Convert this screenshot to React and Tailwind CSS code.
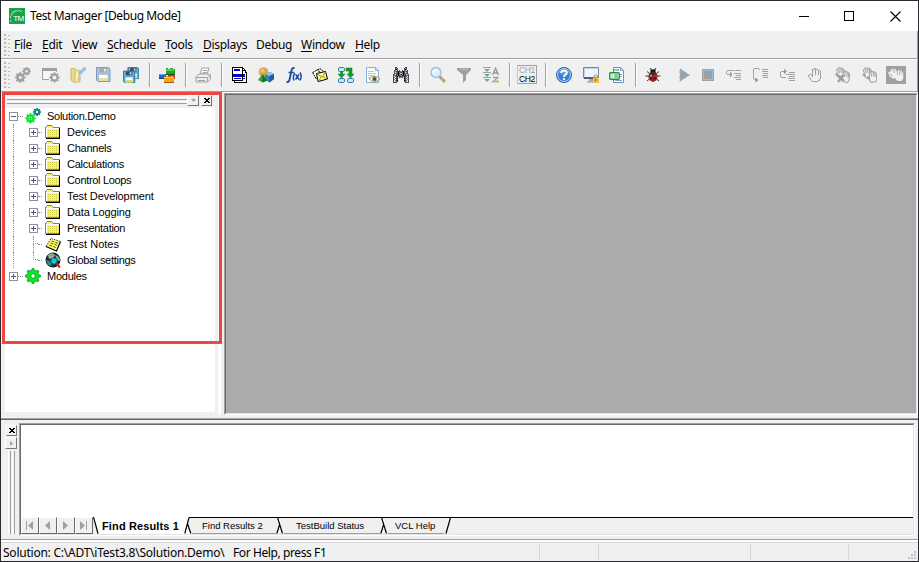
import React from "react";

/* Draws a pixel icon: each character in a row picks a colour from the palette. */
const COLORS = {
  "#": "#a0a0a0", k: "#000000", w: "#ffffff", b: "#0000c8", m: "#4a4a52", d: "#80808a", l: "#d8d8e4",
};
function Pix({ rows, className = "" }) {
  const w = Math.max(...rows.map((r) => r.length));
  return (
    <svg width={w} height={rows.length} viewBox={`0 0 ${w} ${rows.length}`} shapeRendering="crispEdges" className={`block shrink-0 ${className}`}>
      {rows.flatMap((row, y) =>
        [...row].map((ch, x) => (COLORS[ch] ? <rect key={`${x}-${y}`} x={x} y={y} width="1" height="1" fill={COLORS[ch]} /> : null))
      )}
    </svg>
  );
}
function Svg({ children, w = 16, h = 16, crisp = false }) {
  return (
    <svg width={w} height={h} viewBox={`0 0 ${w} ${h}`} fill="none" shapeRendering={crisp ? "crispEdges" : "auto"} className="block shrink-0">
      {children}
    </svg>
  );
}

const HAND = [
  "......##.....",
  "....##.###...",
  "....#..#..##.",
  "....#..#..#.#",
  "....#..#..#.#",
  "....#..#..#.#",
  ".##.#..#..#.#",
  "#..##.......#",
  "#...#.......#",
  ".#..........#",
  "..#.........#",
  "..#........#.",
  "...#......##.",
  "....######...",
];

/* Small open hand used by the paired-hand buttons. */
function MiniHand({ x, y, fill, stroke, tilt = 0 }) {
  return (
    <g transform={`translate(${x} ${y}) rotate(${tilt} 5 6)`} stroke={stroke} fill="none" strokeWidth="1">
      <path d="M2.500 7.500L1.500 5.800.5 6.500 3.500 11.500h5l1-2v-6l-1-1-1-1-1 0L5 .5l-.8 1-1.700.5z" fill={fill} />
      <path d="M4.500 2v4M6.500 1.500V6M8.200 2.500V6.500" />
    </g>
  );
}

function gearPath(cx, cy, r, n) {
  let d = "";
  for (let i = 0; i < n * 4; i++) {
    const a = ((i - 0.5) * Math.PI * 2) / (n * 4);
    const q = i % 4 < 2 ? r : r * 0.74;
    d += `${i ? "L" : "M"}${(cx + Math.cos(a) * q).toFixed(2)} ${(cy + Math.sin(a) * q).toFixed(2)}`;
  }
  return d + "Z";
}
function Gear({ x, y, r, fill, hole, stroke, eye = 0.3 }) {
  return (
    <g>
      <path d={gearPath(x, y, r, 8)} fill={fill} stroke={stroke || fill} strokeWidth={stroke ? 0.8 : 0.5} />
      <circle cx={x} cy={y} r={r * eye} fill={hole} stroke={stroke} strokeWidth={stroke ? 0.8 : 0} />
    </g>
  );
}

const Gears = () => (
  <Svg><Gear x={5.3} y={10.5} r={5.2} fill="#a0a0a0" hole="#f0f0f0" /><Gear x={11.6} y={4.3} r={4.2} fill="#a0a0a0" hole="#f0f0f0" /></Svg>
);
const WindowGear = () => (
  <Svg w={18}>
    <path d="M.5 2.500h14v10H.5z" fill="#f6f6f6" stroke="#a0a0a0" /><path d="M0 1h15v3H0z" fill="#a0a0a0" />
    <circle cx="12.500" cy="10.500" r="5.900" fill="#f0f0f0" /><Gear x={12.5} y={10.5} r={5} fill="#a0a0a0" hole="#f0f0f0" eye={0.38} />
  </Svg>
);
const OpenFolder = () => (
  <Svg>
    <path d="M1 1.500h4l1 1.500v12H3.500L1 13z" fill="#eadb94" stroke="#cdb75d" />
    <path d="M5 4l4-1 1 2-2 10-3 .5z" fill="#f5edbf" stroke="#d2bd62" />
    <path d="M8 6l2-3 2.500-.5L12 1l4-1-.5 4.500-1.300-.7L12 6.500 9.500 8z" fill="#9bbde0" /><path d="M10 8v6l-2 1.500" stroke="#aaa" />
  </Svg>
);
const Floppy = ({ bold }) => (
  <g>
    <path d="M.5.5h12l1.500 1.500v12.500H2L.5 13z" fill={bold ? "#58aede" : "#a8c4e4"} stroke={bold ? "#146ca8" : "#8399b8"} />
    <path d="M3.500 1h7.500v4.500H3.500z" fill={bold ? "#434d58" : "#aaa"} /><path d="M8 2h2v2.500H8z" fill="#e4e8ee" />
    <path d="M3 8h8.500v6H3z" fill="#fff" /><path d="M3 11h8.500v3H3z" fill={bold ? "#eed84a" : "#eedd94"} />
  </g>
);
const Save = () => <Svg><Floppy /></Svg>;
const SaveAll = () => (
  <Svg><g transform="translate(4.500 0) scale(.8)"><Floppy bold /></g><g transform="translate(0 3.600) scale(.84)"><Floppy bold /></g></Svg>
);
const Blocks = () => (
  <Svg>
    <path d="M7 1h2v1h2V1h3v1h2v6H7z" fill="#25a030" /><path d="M7 2h8v2H7z" fill="#53cc49" /><path d="M7 7h9v1H7z" fill="#075c18" />
    <path d="M0 7h7v4H0z" fill="#2868c0" /><path d="M0 7h6v1H0z" fill="#63a6ec" /><path d="M0 11h6v1H0z" fill="#143a80" />
    <path d="M9 8h7v4H9z" fill="#d83a24" /><path d="M5 10h2V9h2v1h3V9h2v1h1v5H5z" fill="#f2a61b" /><path d="M5 10h9v1H5z" fill="#ffd04a" /><path d="M5 15h10v1H5z" fill="#98600c" />
  </Svg>
);
const Printer = () => (
  <Svg>
    <path d="M5 7l2-6h7l-2 6z" fill="#fff" stroke="#a0a0a0" /><path d="M8 3.500h4M7.500 5.500h4" stroke="#a0a0a0" />
    <path d="M1 10l3-3h10l1.500 1v4l-3 3H1z" fill="#eee" stroke="#a0a0a0" /><path d="M1 10.500h11.500l3-2.500M12.500 11v4M3 13.500h7" stroke="#a0a0a0" />
  </Svg>
);
const Forms = () => (
  <Pix rows={[
    "kkkkkkkkkkk....", "kwwwwwwwwwkk...", "kwbbbbbbwwkwk..", "kwbbbbbbwwkkkk.", "kwwwwwwwwwkwwk.", "kwwwwwwwwwkwwkk",
    "kwwwwwwwwwkwwwk", "kbbbbbbbbbkbbwk", "kbbbbbbbbbkbbwk", "kbbbbbbbbbkbbwk", "kwwwwwwwwwkwwwk", "kwbbbbbbbwkbbwk", "kwwwwwwwwwkwwwk", "kkkkkkkkkkkwwwk", "..kwwwwwwwwwwwk", "..kkkkkkkkkkkkk",
  ]} />
);
const Shapes = () => (
  <Svg>
    <circle cx="5.500" cy="5" r="4.800" fill="#e5a34c" /><circle cx="4.500" cy="3.800" r="2" fill="#f3c47e" />
    <path d="M7 7l5-2 4 2v5l-4.500 3.500L7 13z" fill="#3784bd" /><path d="M7 7l4.500 2L16 7l-4-2z" fill="#91c6e8" /><path d="M11.500 9v6.500L16 12V7z" fill="#1f5f99" />
    <path d="M4.500 7L9 13.500 4.500 15.500 0 13z" fill="#31a531" /><path d="M4.500 7L9 13.500l-4.500 2z" fill="#0d721c" />
  </Svg>
);
const Fx = () => (
  <Svg>
    <path d="M8.500 1.500C7 .3 6 1.200 5.500 3.500L3.600 12.500C3.200 14.600 2 15.500.5 14.500" stroke="#1c50a0" strokeWidth="1.900" />
    <path d="M2.500 5.500H8" stroke="#1c50a0" strokeWidth="1.500" />
    <path d="M9 6Q6.300 9.500 8 13.500M14 5.500Q16.500 9.500 13.700 13.500M9.700 7.500l3.300 5M13 7.500l-3.500 5" stroke="#1c50a0" strokeWidth="1.500" />
  </Svg>
);
const Cards = () => (
  <Svg>
    <path d="M3.500 4.500L8 1.500l3.500 3" fill="#f4f4f4" stroke="#000" strokeDasharray="2 .6" />
    <path d="M.7 5.500L6 2.500l3 5-5 4z" fill="#fff" stroke="#000" strokeDasharray="2 .6" />
    <path d="M4.500 6.500l9-2 2 7.500-9.500 2.500z" fill="#fffb9a" stroke="#000" /><path d="M5 7l5.500 3L13.500 5M7 14l2-4M15 12l-4-2.500" stroke="#b08c10" />
  </Svg>
);
const Flow = () => (
  <Svg>
    {[[0.5, 0.5], [0.5, 11.5], [9.5, 11.5]].map(([x, y]) => <rect key={`${x}${y}`} x={x} y={y} width="6" height="4" rx="1.300" fill="#c8e6fa" stroke="#327cab" />)}
    <path d="M2.500 5h2v2H7l-3.500 4L0 7h2.500zM8 1h6v6h2l-3.500 4L9 7h2V4H8z" fill="#12a02c" stroke="#08711b" strokeWidth=".5" />
  </Svg>
);
const DocEye = () => (
  <Svg>
    <path d="M1.500.5h9l3 3v12h-12z" fill="#f8fcff" stroke="#8caed0" /><path d="M10.500.5v3h3" stroke="#8caed0" />
    <path d="M3 4.500h6M3 6.500h8M3 8.500h7M3 10.500h3" stroke="#a9c9e8" /><path d="M4 12q5-5.500 11 0-5.500 5-11 0z" fill="#fff" stroke="#b78b56" />
    <circle cx="9.500" cy="12" r="2.300" fill="#638a35" /><circle cx="9.500" cy="12" r="1" fill="#222" />
  </Svg>
);
const Binoculars = () => (
  <Pix rows={[
    "..mm........mm..", "..mdm......mdm..", "..mkm......mkm..", ".mdlm.m..m.mdlm.", ".mdmmkmddmkmdmm.", ".mldmkdmmdkmldm.", ".mdmmkmllmkmdmm.", "mdlmmkdmmdkmmldm",
    "mdmmdkmddmkdmmdm", "mldmkdmmmmdkmdlm", "mdlmm.mddm.mmldm", "mldmk......kmdlm", "mdlmm......mmldm", "mldmk......kmdlm", "mllmm......mmllm", "mmmm........mmmm",
  ]} />
);
const Magnify = () => (
  <Svg><path d="M10 10l5 4.800" stroke="#c5a272" strokeWidth="3" /><path d="M9 9l2 2" stroke="#999" strokeWidth="2" /><circle cx="6" cy="5.500" r="5" fill="#d9efff" stroke="#9dbfdf" strokeWidth="1.400" /><path d="M3 6q.5-3 4-3" stroke="#fff" strokeWidth="1.500" /></Svg>
);
const Funnel = () => <Svg><path d="M1 1h14v2l-5 5v5l-3 3V8L1 3z" fill="#a0a0a0" /><path d="M4 2.500h8" stroke="#b9b9b9" /></Svg>;
const SortAz = () => (
  <Svg>
    <path d="M0 .5h8M0 5.500h8M0 10.500h8" stroke="#a0a0a0" /><path d="M1 2h6L4 5zM1 12h6l-3 3z" fill="#999" /><path d="M1 7h6l-3 3z" fill="#62b577" />
    <path d="M9.500 8l3-6.500 3 6.500M10.500 6h4" stroke="#a0a0a0" strokeWidth="1.700" /><path d="M10 10.500h5l-5 4h6" stroke="#a0a0a0" strokeWidth="1.300" /><path d="M10 14.500h6" stroke="#e4b23c" strokeWidth="1.500" />
  </Svg>
);
const Channels = () => (
  <div className="h-[19px] w-5 shrink-0 border border-b-[#a0a0a0] border-l-[#c4c4c4] border-r-[#a0a0a0] border-t-[#a0a0a0] pl-px font-['Liberation_Sans',Arial,sans-serif] text-[8.5px] leading-[8px] tracking-[-0.4px]">
    <div className="h-2 text-[#a0a0a0]">CH1</div><div className="pt-px text-black">CH2</div>
  </div>
);
const Help = () => (
  <Svg><circle cx="8" cy="8" r="7.500" fill="#3a82cf" stroke="#2463a8" /><circle cx="8" cy="8" r="6.500" stroke="#b2d5f3" /><path d="M2.500 6q5.500-7 11 0-5.500 3-11 0z" fill="#74b0e8" opacity=".55" />
    <path d="M5.200 6Q5.300 3.500 8 3.500t2.800 2.200Q10.800 7 9.200 7.800 8 8.500 8 10M8 11.200v1.800" stroke="#fff" strokeWidth="1.900" /></Svg>
);
const Monitor = () => (
  <Svg><path d="M.5.5h15v10H.5z" fill="#eef5fc" stroke="#7989a0" /><path d="M1.500 9.500V1.500h13" stroke="#bdd3e9" /><path d="M1 10h14v2H1z" fill="#4e6078" /><path d="M6 12h4v2h2v1.500H4V14h2z" fill="#9caabd" />
    <path d="M11 11V9q1.700-2.500 3.500 0v2" stroke="#a98528" /><path d="M10 10.500h6V16h-6z" fill="#f3bf32" /><path d="M12.800 12v2" stroke="#6c4b08" /></Svg>
);
const DocSheet = () => (
  <Svg><path d="M4.500.5h7l3 3v12h-10z" fill="#fff" stroke="#6b91b9" /><path d="M11.500.5v3h3M10 7.500h3M10 9.500h3M6 13.500h7" stroke="#7da3c7" /><path d="M5 2h5v2H5z" fill="#95bad8" />
    <rect x=".7" y="5.700" width="9.600" height="6.600" rx="1" fill="#fff" stroke="#159737" strokeWidth="1.400" /><path d="M2.500 8h1M5 8h4M2.500 10h1M5 10h4" stroke="#159737" strokeWidth="1.200" /></Svg>
);
const Bug = () => (
  <Svg><path d="M5 1l1.500 2M11 1L9.500 3M2 4.500l2.500 2M14 4.500l-2.500 2M.5 9h3.500M15.500 9H12M2 14l2.500-2M14 14l-2.500-2" stroke="#333" /><path d="M5.500 2.500h5V6h-5z" fill="#111" /><ellipse cx="8" cy="9.700" rx="4.600" ry="5" fill="#a82c26" />
    <path d="M4 6.500q4-4 8 0l-1 1H5z" fill="#333" /><path d="M8 6v9" stroke="#5d100d" /><circle cx="6.200" cy="8.700" r="1" fill="#f09a8a" /><circle cx="5.800" cy="11.500" r="1" fill="#3d0808" /><circle cx="10.200" cy="11.500" r="1" fill="#3d0808" /></Svg>
);
const Play = () => <Svg w={12} h={14}><path d="M1 .8l9.500 6.200L1 13.200z" fill="#a0a0a0" stroke="#87b9e9" strokeDasharray="4 1" /></Svg>;
const Stop = () => <Svg w={12} h={12} crisp><path d="M0 0h12v12H0z" fill="#a0a0a0" /><path d="M1 1h10v10H1z" fill="#8dbdea" /><path d="M2 2h8v6l-2 2H2z" fill="#a0a0a0" /></Svg>;
const StepInto = () => <Svg w={15} h={12} crisp><path d="M1 1h7v1H1zM0 2h1v3H0zM1 5h5v1H1zM4 3h1v5H4zM5 4h1v3H5zM9 1h6v1H9zM8 4h7v1H8zM10 6h5v1h-5zM8 8h7v1H8zM10 10h5v1h-5z" fill="#a0a0a0" /></Svg>;
const StepOver = () => <Svg w={15} h={16} crisp><path d="M1 1h5v1H1zM0 2h1v10H0zM1 12h4v1H1zM2 11h2v4H2zM4 12h1v2H4zM6 2h1v1H6zM9 2h6v1H9zM9 4h6v1H9zM10 6h5v1h-5zM9 8h6v1H9zM10 10h5v1h-5z" fill="#a0a0a0" /></Svg>;
const StepOut = () => <Svg w={15} h={14} crisp><path d="M1 3h6v1H1zM4 1h1v5H4zM5 2h1v3H5zM0 4h1v5H0zM1 9h5v1H1zM9 4h6v1H9zM6 6h9v1H6zM9 8h6v1H9zM8 10h7v1H8zM9 12h6v1H9z" fill="#a0a0a0" /></Svg>;
const HandOne = () => <Pix rows={HAND} />;
const HandsCross = () => (
  <Svg><MiniHand x={1} y={0} fill="#f0f0f0" stroke="#a0a0a0" tilt={-10} /><MiniHand x={6} y={3.5} fill="#f0f0f0" stroke="#a0a0a0" tilt={10} /><path d="M4 8l6 6M10 8l-6 7" stroke="#a0a0a0" strokeWidth="2.400" /></Svg>
);
const HandsTwo = () => (
  <Svg><MiniHand x={1} y={0} fill="#f0f0f0" stroke="#a0a0a0" tilt={-20} /><MiniHand x={6} y={3.5} fill="#f0f0f0" stroke="#a0a0a0" tilt={-5} /></Svg>
);
const HandsSolid = () => (
  <div className="flex h-[18px] w-5 shrink-0 items-center justify-center bg-[#a0a0a0]">
    <Svg w={16} h={15}>
      <path d="M6 11.500L2.500 9 1 5.800l1-.5 2 1.700L3 2.500M5 8L5 1.500M7 7L7.500 2" stroke="#f0f0f0" strokeWidth="1.400" />
      <path d="M3 6h5v5H5z" fill="#f0f0f0" /><path d="M8.500 9V4M10.700 9V3M12.900 9V3.500M14.500 10V5.500M9 13L6.500 8.500" stroke="#f0f0f0" strokeWidth="1.400" /><path d="M8 8h7.200v3.500L13.500 14H9.500L8 11.500z" fill="#f0f0f0" />
    </Svg>
  </div>
);
const Sep = () => <div className="h-6 w-0.5 shrink-0 border-l border-[#a0a0a0] bg-white" />;

const TOOLS = [
  [Gears, "ml-[3px]"], [WindowGear, "ml-[11px]"], [OpenFolder, "ml-[10px]"], [Save, "ml-[10px]"], [SaveAll, "ml-[11px]"], [Sep, "ml-[10px]"],
  [Blocks, "ml-2"], [Sep, "ml-[10px]"], [Printer, "ml-2"], [Sep, "ml-[10px]"],
  [Forms, "ml-[9px]"], [Shapes, "ml-[11px]"], [Fx, "ml-3"], [Cards, "ml-[10px]"], [Flow, "ml-[10px]"], [DocEye, "ml-[11px]"], [Binoculars, "ml-3"], [Sep, "ml-[10px]"],
  [Magnify, "ml-[9px]"], [Funnel, "ml-[10px]"], [SortAz, "ml-[11px]"], [Sep, "ml-[10px]"], [Channels, "ml-[6px]"], [Sep, "ml-2"],
  [Help, "ml-[9px]"], [Monitor, "ml-[11px]"], [DocSheet, "ml-[10px]"], [Sep, "ml-[10px]"], [Bug, "ml-2"],
  [Play, "ml-[18px]"], [Stop, "ml-[11px]"], [StepInto, "ml-3"], [StepOver, "ml-3"], [StepOut, "ml-3"], [HandOne, "ml-[13px]"], [HandsCross, "ml-[13px]"], [HandsTwo, "ml-[11px]"], [HandsSolid, "ml-[9px]"],
];

function Grip({ rows }) {
  return (
    <svg width="8" height={rows * 4} viewBox={`0 0 8 ${rows * 4}`} shapeRendering="crispEdges" className="block shrink-0">
      {Array.from({ length: rows }, (_, i) => (
        <g key={i}>
          <path d={`M1 ${i * 4 + 3}h1v1h-1zM5 ${i * 4 + 1}h1v1h-1z`} fill="#fff" />
          <path d={`M0 ${i * 4 + 1}h2v2h-2zM4 ${i * 4 + 2}h2v1h-2z`} fill="#b8b8b8" />
        </g>
      ))}
    </svg>
  );
}

const MENU = [
  ["", "F", "ile", "w-7"], ["", "E", "dit", "w-[30px]"], ["", "V", "iew", "w-[35px]"], ["", "S", "chedule", "w-[58px]"], ["", "T", "ools", "w-[38px]"],
  ["", "D", "isplays", "w-[53px]"], ["Debug", "", "", "w-[45px]"], ["", "W", "indow", "w-[54px]"], ["", "H", "elp", "w-8"],
];

function Expander({ minus }) {
  return (
    <svg width="9" height="9" viewBox="0 0 9 9" shapeRendering="crispEdges" className="block shrink-0">
      <rect x=".5" y=".5" width="8" height="8" fill="#fff" stroke="#919191" />
      <path d={minus ? "M2 4h5v1H2z" : "M2 4h5v1H2zM4 2h1v5H4z"} fill="#3c5aa8" />
    </svg>
  );
}
const Folder = () => (
  <svg width="16" height="14" viewBox="0 0 16 14" shapeRendering="crispEdges" className="block">
    <path d="M2 0h5v1h1v1h7v12H1v-1H0V2h1V1h1z" fill="#808080" />
    <path d="M2 1h5v1h1v1h6v9H1V2h1z" fill="#fffb35" />
    <path d="M1 3.500h13M1 5.500h13M1 7.500h13M1 9.500h13M1 11.500h13" stroke="#d6ce48" strokeDasharray="1 1" />
    <path d="M1 3h13v1H2v8H1z" fill="#fff" /><path d="M14 3h1v11H1v-1h13z" fill="#000" />
  </svg>
);
const Notes = () => (
  <Svg>
    <path d="M6 2.500l9.500 3-4 9.500L1 10.500z" fill="#ffff70" /><path d="M15.500 5.500L11.500 15 1 10.500" stroke="#000" strokeWidth="1.200" /><path d="M1 10.500l5-8 9.500 3" stroke="#000" strokeWidth=".8" strokeDasharray="1.500 1" />
    <path d="M6.500 5l6.500 2.200M5.500 7l6.500 2.200M4.300 9l6.500 2.500" stroke="#5c5a20" strokeDasharray="3 1" />
  </Svg>
);
const Globe = () => (
  <Svg><circle cx="8" cy="8" r="7.500" fill="#18282e" /><path d="M3 3l4-2 3 2-2 3-4 1zM10 3l4 2 1 4-3-1z" fill="#a4b4a8" /><path d="M1 8l4 1 2 5-4-1z" fill="#278d91" /><circle cx="9" cy="9" r="3.300" fill="#16c8d0" stroke="#075a64" /><path d="M5 4l3-1M12 4l2 3" stroke="#47a05a" /><path d="M11.500 11.500l3.500 4" stroke="#d81818" strokeWidth="2" /></Svg>
);
const SolutionIcon = () => (
  <Svg><Gear x={12} y={4} r={4} fill="#008080" hole="#fff" /><Gear x={5.5} y={10.3} r={5.1} fill="#00f020" hole="#fff" /><path d="M5.500 9.500v2M4.500 10.500h2" stroke="#006000" strokeWidth=".7" /></Svg>
);
const ModulesIcon = () => <Svg><Gear x={8} y={8} r={7.5} fill="#00f020" hole="#fff" stroke="#087c18" /></Svg>;

const FOLDERS = [
  ["Devices", ""], ["Channels", "tracking-[-0.25px]"], ["Calculations", "tracking-[-0.25px]"], ["Control Loops", "tracking-[-0.33px]"],
  ["Test Development", "tracking-[-0.08px]"], ["Data Logging", "tracking-[-0.15px]"], ["Presentation", "tracking-[-0.3px]"],
];

function Root({ minus, icon, label, tracking }) {
  return (
    <div className="flex h-4 items-center pl-1">
      <Expander minus={minus} />
      <div className="mr-0.5 w-[5px] border-t border-dotted border-[#919191]" />
      {icon}
      <span className={`ml-[6px] text-black ${tracking}`}>{label}</span>
    </div>
  );
}
function Leaf({ plus, icon, label, last, tracking = "" }) {
  return (
    <div className="flex h-4 items-center pl-2">
      <div className="flex h-4 w-4 items-center border-l border-dotted border-[#919191]" />
      <div className="flex h-4 w-[9px] shrink-0 items-center">
        {plus ? <Expander /> : (
          <div className="flex h-4 w-full flex-col pl-1">
            <div className="h-2 border-b border-l border-dotted border-[#919191]" />
            <div className={last ? "h-2" : "h-2 border-l border-dotted border-[#919191]"} />
          </div>
        )}
      </div>
      <div className="mr-[3px] w-1 border-t border-dotted border-[#919191]" />
      <div className="w-4">{icon}</div>
      <span className={`ml-[6px] whitespace-nowrap text-black ${tracking}`}>{label}</span>
    </div>
  );
}

function Mini({ children, className = "" }) {
  return (
    <div className={`flex shrink-0 items-center justify-center border border-b-[#777] border-l-white border-r-[#777] border-t-white bg-[#f0f0f0] ${className}`}>{children}</div>
  );
}
const Cross = () => <Pix rows={["kk..kk", ".kkkk.", "..kk..", ".kkkk.", "kk..kk"]} />;

function NavButton({ d }) {
  return (
    <div className="flex h-[17px] w-[18px] items-center justify-center border border-b-[#696969] border-l-white border-r-[#696969] border-t-white bg-[#f0f0f0]">
      <svg width="9" height="9" viewBox="0 0 9 9" className="-ml-px block"><path d={d} fill="#a0a0a0" /></svg>
    </div>
  );
}
/* Slanted divider between two sheet tabs. */
function Slope({ kind }) {
  return (
    <svg width="8" height="17" viewBox="0 0 8 17" className="block shrink-0">
      {kind === "first" && <><path d="M0 0h1l5 17H0z" fill="#f0f0f0" /><path d="M.5 0L5 16.500" stroke="#000" strokeWidth="1.200" /></>}
      {kind === "active" && <><path d="M5 0h3v17H6L3.500 7z" fill="#f0f0f0" /><path d="M5 .5h3M5 .5L.8 16.500M3.300 6L6.800 16.500" stroke="#000" strokeWidth="1.200" /></>}
      {kind === "mid" && <><path d="M0 0h8v17H0z" fill="#f0f0f0" /><path d="M0 .5h8M1.500.5L6.500 16.500M3.500 8L.8 16.500" stroke="#000" strokeWidth="1.200" /></>}
      {kind === "end" && <><path d="M0 0h8v17H0z" fill="#f0f0f0" /><path d="M0 .5h8M6.500.5L2 16.500" stroke="#000" strokeWidth="1.200" /></>}
    </svg>
  );
}
function SheetTab({ children, className }) {
  return <div className={`h-[17px] border-b border-t border-b-[#a0a0a0] border-t-black bg-[#f0f0f0] text-[9.5px] leading-[15px] ${className}`}>{children}</div>;
}

export default function App() {
  return (
    <div className="relative flex h-[562px] w-[919px] flex-col overflow-hidden border border-[#2b2b2f] bg-[#f0f0f0] font-['Noto_Sans','Open_Sans',sans-serif] text-xs text-black">
      <header className="flex h-[30px] shrink-0 items-center bg-white pl-2">
        <svg width="16" height="16" viewBox="0 0 16 16" className="block shrink-0">
          <path d="M0 0h16v16H0z" fill="#18a34a" />
          <path d="M2 14V12.500H1M2 10.500L1 9l1.500-1.500L2 6l2-.5V3.500l2 .5 1-2 1.500 1.500L10 2l1 1.500 2-.5" fill="none" stroke="#a6e3b8" strokeWidth=".9" />
          <text x="4.200" y="13" fill="#fff" fontSize="8" fontFamily="Liberation Sans, Arial, sans-serif" textLength="11">TM</text>
        </svg>
        <h1 className="ml-[5px] grow whitespace-nowrap text-xs tracking-[-0.41px]">Test Manager [Debug Mode]</h1>
        <div className="flex items-center gap-[35px] pr-[17px]">
          <div className="h-px w-[10px] bg-black" />
          <div className="mr-px h-[10px] w-[10px] border border-black" />
          <svg width="11" height="11" viewBox="0 0 11 11" className="block"><path d="M.5.5l10 10M10.500.5l-10 10" stroke="#000" strokeWidth="1.100" /></svg>
        </div>
      </header>

      <nav className="flex h-7 shrink-0 items-center border-b border-r border-[#a0a0a0] pl-[3px]">
        <Grip rows={6} />
        <div className="ml-0.5 flex tracking-[-0.3px]">
          {MENU.map(([a, u, b, w]) => (
            <span key={a + u + b} className={`whitespace-nowrap ${w}`}>{a}<u className="underline-offset-2">{u}</u>{b}</span>
          ))}
        </div>
      </nav>

      <div className="flex h-[33px] shrink-0 items-center border-b border-r border-t border-b-[#a0a0a0] border-r-[#a0a0a0] border-t-white pb-0.5 pl-[3px]">
        <Grip rows={7} />
        {TOOLS.map(([Tool, ml], i) => <div key={i} className={`shrink-0 ${ml}`}><Tool /></div>)}
      </div>

      <div className="flex h-[326px] shrink-0 border-t border-white">
        <aside className="flex w-[217px] shrink-0 flex-col pl-1 pr-[3px]">
          <div className="flex h-[15px] items-center pl-0.5">
            <div className="flex w-[180px] flex-col gap-px">
              <div className="h-[3px] border-b border-t border-b-[#a0a0a0] border-t-white" />
              <div className="h-[3px] border-b border-t border-b-[#a0a0a0] border-t-white" />
            </div>
            <Mini className="h-[11px] w-3"><svg width="5" height="3" viewBox="0 0 5 3"><path d="M0 0h5L2.500 3z" fill="#a0a0a0" /></svg></Mini>
            <Mini className="ml-0.5 h-[11px] w-[11px]"><Cross /></Mini>
          </div>
          <div className="h-[304px] bg-white font-['Liberation_Sans',Arial,sans-serif] text-[11px] leading-4">
            <Root minus icon={<SolutionIcon />} label="Solution.Demo" tracking="tracking-[-0.28px]" />
            {FOLDERS.map(([f, t]) => <Leaf key={f} plus icon={<Folder />} label={f} tracking={t} />)}
            <Leaf icon={<Notes />} label="Test Notes" />
            <Leaf last icon={<Globe />} label="Global settings" tracking="tracking-[-0.28px]" />
            <Root icon={<ModulesIcon />} label="Modules" tracking="tracking-[-0.25px]" />
          </div>
        </aside>
        <div className="h-[322px] w-[3px] shrink-0 bg-white" />
        <main className="ml-[3px] h-[322px] grow border-b border-l border-r border-t border-b-white border-l-[#a0a0a0] border-r-white border-t-[#a0a0a0]">
          <div className="h-full border border-b-[#e3e3e3] border-l-[#696969] border-r-[#e3e3e3] border-t-[#696969] bg-[#ababab]" />
        </main>
      </div>

      <section className="flex h-[121px] shrink-0 border-t border-[#a0a0a0]">
        <div className="flex w-full border-t border-[#696969] pr-[3px] pt-[3px]">
          <div className="flex w-[18px] flex-col items-end pr-0.5 pt-0.5">
            <Mini className="h-[11px] w-[11px]"><Cross /></Mini>
            <Mini className="mt-px h-[12px] w-[12px]"><svg width="3" height="5" viewBox="0 0 3 5"><path d="M0 0v5l3-2.500z" fill="#a0a0a0" /></svg></Mini>
            <div className="mr-0.5 mt-0.5 flex h-[83px] gap-px">
              <div className="w-[3px] border-l border-r border-l-white border-r-[#a0a0a0]" />
              <div className="w-[3px] border-l border-r border-l-white border-r-[#a0a0a0]" />
            </div>
          </div>
          <div className="h-[113px] grow border border-b-white border-l-[#a0a0a0] border-r-white border-t-[#a0a0a0]">
            <div className="flex h-full flex-col border border-b-[#e3e3e3] border-l-[#696969] border-r-[#e3e3e3] border-t-[#696969] bg-white">
              <div className="h-[92px] shrink-0" />
              <div className="flex h-[17px] shrink-0 bg-[#f0f0f0] font-['Liberation_Sans',Arial,sans-serif]">
                <NavButton d="M1 0h1v9H1zM8 0v9L3 4.500z" />
                <NavButton d="M7 0v9L2 4.500z" />
                <NavButton d="M2 0v9l5-4.500z" />
                <NavButton d="M7 0h1v9H7zM1 0v9l5-4.500z" />
                <div className="flex bg-white">
                  <Slope kind="first" />
                  <div className="w-[83px] whitespace-nowrap pl-px text-[11px] font-bold leading-[18px] tracking-[0.13px]">Find Results 1</div>
                  <Slope kind="active" />
                </div>
                <SheetTab className="w-[84px] pl-[10px]">Find Results 2</SheetTab>
                <Slope kind="mid" />
                <SheetTab className="w-[96px] pl-[12px]">TestBuild Status</SheetTab>
                <Slope kind="mid" />
                <SheetTab className="w-[56px] pl-[7px]">VCL Help</SheetTab>
                <Slope kind="end" />
                <div className="grow border-t border-black" />
              </div>
            </div>
          </div>
        </div>
      </section>

      <footer className="flex h-[22px] shrink-0 flex-col border-t border-[#a0a0a0]">
        <div className="h-0.5 shrink-0 bg-white" />
        <div className="flex h-[19px] items-center border-t border-[#d7d7d7] pl-px">
          <div className="flex w-[537px] whitespace-pre pl-px pt-0.5">
            <span className="w-[230px] tracking-[-0.23px]">Solution: C:\ADT\iTest3.8\Solution.Demo\</span><span className="tracking-[-0.4px]">For Help, press F1</span>
          </div>
          <div className="h-4 w-[59px] border-l border-[#d7d7d7]" />
          <div className="h-4 w-[152px] border-l border-[#d7d7d7]" />
          <div className="h-4 w-[98px] border-l border-[#d7d7d7]" />
          <div className="flex h-4 grow items-end justify-end border-l border-[#d7d7d7] pb-px pr-0.5">
            <svg width="8" height="8" viewBox="0 0 8 8" shapeRendering="crispEdges"><path d="M6 0h2v2H6zM3 3h2v2H3zM6 3h2v2H6zM0 6h2v2H0zM3 6h2v2H3zM6 6h2v2H6z" fill="#bfbfbf" /></svg>
          </div>
        </div>
      </footer>

      {/* Highlight frame lying over the solution tree */}
      <div className="pointer-events-none absolute left-px top-[91px] h-[252px] w-[220px] border-[3px] border-[#ee4643]" />
    </div>
  );
}
